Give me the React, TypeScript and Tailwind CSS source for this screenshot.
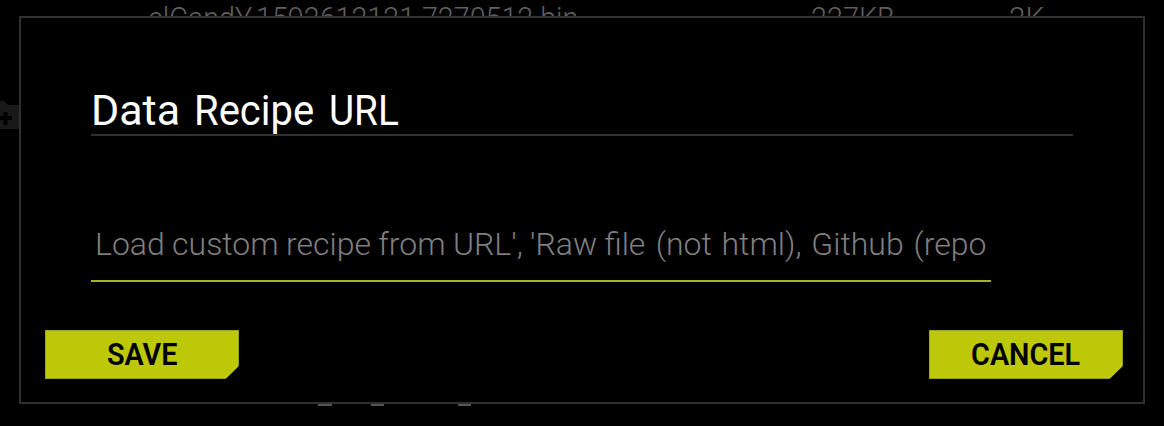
function ActionButton({ label }: { label: string }) {
  return (
    <button className="flex h-[49px] w-[194px] items-center justify-center bg-[#9ba31a] p-px [clip-path:polygon(0_0,100%_0,100%_73%,93%_100%,0_100%)]">
      <span className="flex h-full w-full items-center justify-center bg-[#bcc808] pb-[2px] text-[32px] leading-none font-semibold text-black">
        <span className="inline-block scale-x-[.9]">{label}</span>
      </span>
    </button>
  );
}

export default function App() {
  return (
    <div className="relative h-[426px] w-[1164px] overflow-hidden bg-black px-[19px] pt-[16px] font-['Roboto',sans-serif]">
      <div className="absolute top-[-1px] left-[148px] origin-left scale-x-[.896] text-[32px] leading-[38px] font-light whitespace-nowrap text-[#606060]">
        elCandY.1592612121.7270512.bin
      </div>
      <div className="absolute top-[-1px] left-[811px] origin-left scale-x-[.9] text-[32px] leading-[38px] font-light text-[#606060]">
        227KB
      </div>
      <div className="absolute top-[-1px] left-[1009px] origin-left scale-x-[.93] text-[32px] leading-[38px] font-light text-[#606060]">
        2K
      </div>
      <svg className="absolute top-[100px] left-0" width="20" height="30" viewBox="0 0 20 30">
        <path d="M0 1H4L8 5H20V29H0Z" fill="#191919" />
        <path d="M0 16H3.5V12H7.5V16H12V20H7.5V25H3.5V20H0Z" fill="#000" />
      </svg>
      <div className="absolute top-[404px] left-[318px] h-[2px] w-[14px] bg-[#555]" />
      <div className="absolute top-[404px] left-[371px] h-[2px] w-[13px] bg-[#555]" />
      <div className="absolute top-[404px] left-[458px] h-[2px] w-[13px] bg-[#555]" />

      <div className="relative flex h-[388px] w-[1126px] flex-col border-2 border-[#303030] bg-black pt-[66px]">
        <h1 className="ml-[70px] flex h-[52px] w-[982px] border-b-2 border-[#303030] text-[43px] leading-[52px] text-white">
          <span className="w-[103px]">Data </span>
          <span className="w-[135px] origin-left scale-x-[.93]">Recipe </span>
          <span className="origin-left scale-x-[.9]">URL</span>
        </h1>
        <div className="mt-[78px] ml-[70px] h-[68px] w-[900px] border-b-2 border-[#a6b321] pl-1 text-[32px] leading-[60px] font-light whitespace-nowrap text-[#7f7f7f]">
          <span className="[word-spacing:-0.5px]">Load custom recipe from URL', 'Raw file </span>
          <span className="ml-[3px] [word-spacing:2px]">(not html), Github (repo</span>
        </div>
        <div className="mt-[48px] flex justify-between pr-[20px] pl-[24px]">
          <ActionButton label="SAVE" />
          <ActionButton label="CANCEL" />
        </div>
      </div>
    </div>
  );
}
